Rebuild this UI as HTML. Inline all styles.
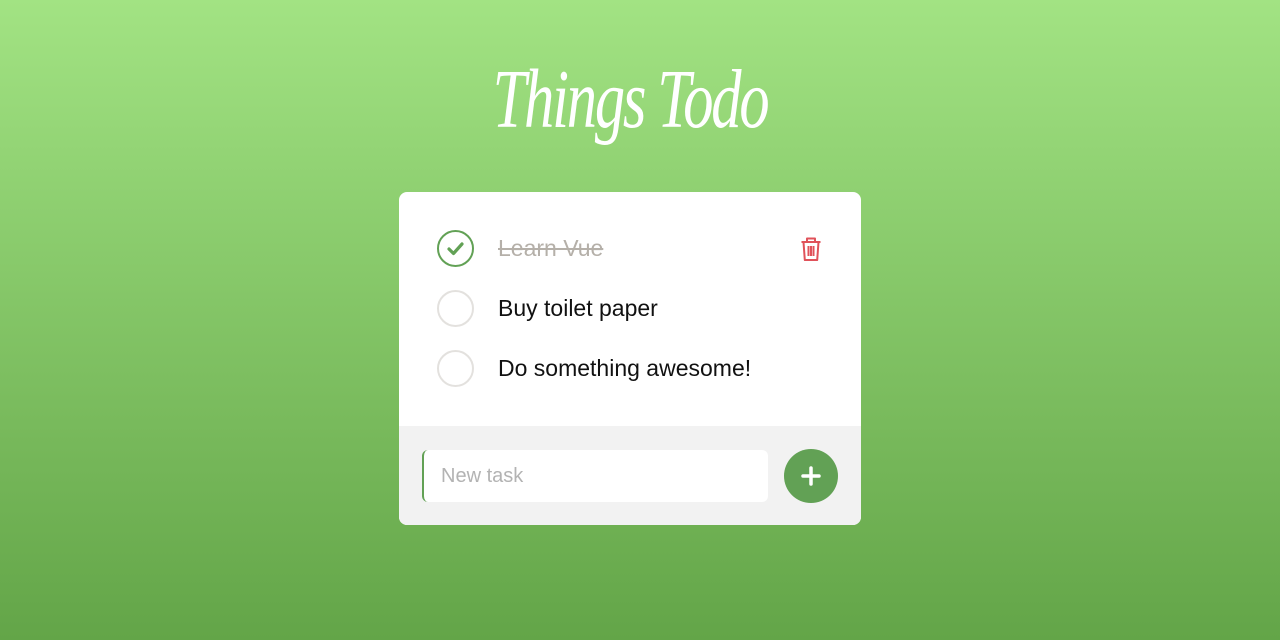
<!DOCTYPE html>
<html><head><meta charset="utf-8"><style>
*{margin:0;padding:0;box-sizing:border-box}
body{width:1280px;height:640px;overflow:hidden;background:linear-gradient(#a2e383,#63a548);font-family:"Liberation Sans",sans-serif;position:relative}
.title{position:absolute;left:-10px;width:1280px;top:50px;text-align:center;color:#fff;font-family:"Liberation Serif",serif;font-style:italic;font-size:84px;letter-spacing:-3px;transform:scaleX(0.72);line-height:100px}
.card{position:absolute;left:399px;top:192px;width:462px;height:333px;background:#fff;border-radius:8px;overflow:hidden}
.foot{position:absolute;left:0;top:234px;width:462px;height:99px;background:#f2f2f2}
.row{position:absolute;left:38px;height:38px;display:flex;align-items:center}
.c{width:37px;height:37px;border-radius:50%;border:2px solid #e3e1de;margin-right:24px;position:relative}
.c.done{border-color:#62a155}
.t{font-size:23px;color:#111;position:relative;top:0px}
.t.done{color:#b5b0a9;text-decoration:line-through}
.inp{position:absolute;left:23px;top:258px;width:346px;height:52px;background:#fff;border-radius:6px;border-left:2px solid #62a155;font-size:20px;color:#b3b3b3;padding:15px 0 0 17px}
.btn{position:absolute;left:385px;top:257px;width:54px;height:54px;border-radius:50%;background:#62a155}
</style></head><body>
<div class="title">Things Todo</div>
<div class="card">
<div class="row" style="top:37px"><div class="c done"><svg width="33" height="33" style="position:absolute;left:0;top:0"><path d="M10 17 L14.5 21.5 L23 12" fill="none" stroke="#62a155" stroke-width="3.2" stroke-linecap="round" stroke-linejoin="round"/></svg></div><span class="t done">Learn Vue</span></div>
<svg style="position:absolute;left:400px;top:44px" width="24" height="26" viewBox="0 0 24 26"><path d="M2.5 6H21.5M8 6V2.5h8V6M4.5 6l1.3 18h12.4L19.5 6M9.5 10v10M12 10v10M14.5 10v10" fill="none" stroke="#e0525a" stroke-width="2" stroke-linejoin="round"/></svg>
<div class="row" style="top:97px"><div class="c"></div><span class="t">Buy toilet paper</span></div>
<div class="row" style="top:157px"><div class="c"></div><span class="t">Do something awesome!</span></div>
<div class="foot"></div>
<div class="inp">New task</div>
<div class="btn"><svg width="54" height="54"><path d="M27 19V35M19 27H35" stroke="#fff" stroke-width="3.5" stroke-linecap="round"/></svg></div>
</div>
</body></html>
